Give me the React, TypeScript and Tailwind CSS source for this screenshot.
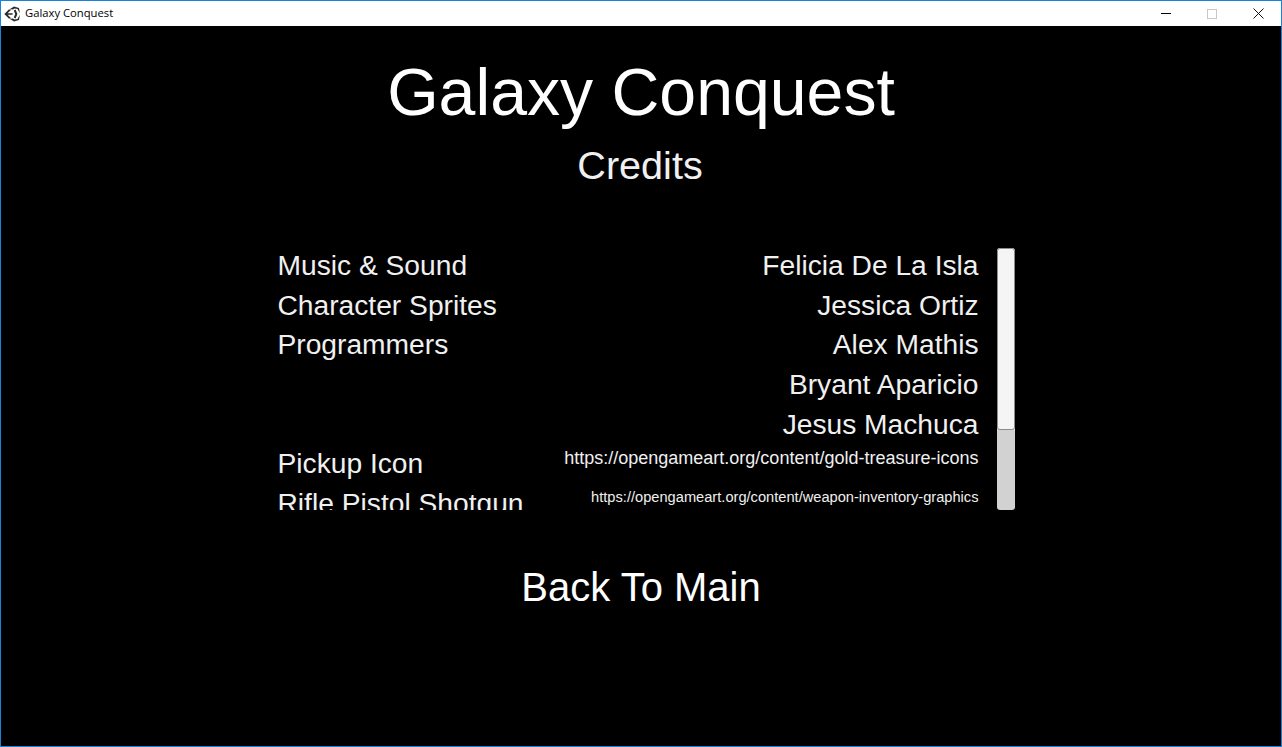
import React from 'react';

const rows = [
  { label: 'Music & Sound', value: 'Felicia De La Isla' },
  { label: 'Character Sprites', value: 'Jessica Ortiz' },
  { label: 'Programmers', value: 'Alex Mathis' },
  { label: '', value: 'Bryant Aparicio' },
  { label: '', value: 'Jesus Machuca' },
  { label: 'Pickup Icon', value: 'https://opengameart.org/content/gold-treasure-icons', small: 'text-[18px] pb-[11px]' },
  { label: 'Rifle,Pistol,Shotgun', value: 'https://opengameart.org/content/weapon-inventory-graphics', small: 'text-[14.65px] pb-[12px]' },
];

function UnityLogo() {
  return (
    <svg width="16" height="16" viewBox="0 0 16 16" fill="#2b2b2b">
      {/* unity cube: arrow on the left, arms top and bottom, bar on the right */}
      <path d="M.3 8 4.8 3.6H7.4L3.6 7.2H8.6V8.8H3.6L7.4 12.4H4.8Z" />
      <path d="M6 2.9 10 .6 15 2l.9 5.2-1.9-3.1-.4-1-3-.7-1.7 1.2Z" />
      <path d="M6 13.1 10 15.4 15 14l.9-5.2-1.9 3.1-.4 1-3 .7-1.7-1.2Z" />
      <path d="M9.8 4.4 11.6 3.4 13.4 8 11.6 12.6 9.8 11.6 11.2 8Z" />
    </svg>
  );
}

export default function App() {
  return (
    <div className="h-[747px] w-[1282px] flex flex-col overflow-hidden border border-[#1883d7] bg-black font-['Liberation_Sans',Arial,sans-serif]">
      {/* title bar */}
      <div className="h-[25px] flex items-center bg-white shrink-0">
        <div className="ml-[3px] w-[16px] flex items-center justify-center">
          <UnityLogo />
        </div>
        <span className="ml-[5px] text-[11.25px] text-black font-['Open_Sans','Noto_Sans',sans-serif]">Galaxy Conquest</span>
        <div className="ml-auto flex items-center h-full">
          <div className="w-[46px] flex justify-center">
            <div className="w-[10px] h-px bg-black" />
          </div>
          <div className="w-[46px] flex justify-center">
            <div className="w-[10px] h-[10px] border border-[#c8c8c8]" />
          </div>
          <div className="w-[46px] flex justify-center">
            <svg width="11" height="11" viewBox="0 0 11 11" stroke="#111" strokeWidth="1">
              <path d="M.5.5l10 10M10.5.5l-10 10" />
            </svg>
          </div>
        </div>
      </div>

      <div className="flex-1 flex flex-col items-center text-[#f0f0f0]">
        <h1 className="mt-[26px] text-[66.2px] leading-[80px] text-white">Galaxy Conquest</h1>
        <h2 className="mt-[8px] mr-[2px] text-[39.6px] leading-[50px]">Credits</h2>

        {/* credits scroll view */}
        <div className="mt-[58px] ml-[10px] w-[737px] h-[262px] flex">
          <div className="w-[701px] h-[262px] overflow-hidden flex flex-col">
            {rows.map((row, i) => (
              <div key={i} className="h-[39.7px] shrink-0 pb-[6px] flex items-center justify-between text-[28.2px] leading-[34px] whitespace-nowrap">
                <span>{row.label}</span>
                <span className={row.small}>{row.value}</span>
              </div>
            ))}
          </div>
          <div className="ml-[18px] w-[18px] h-[262px] rounded-[3px] bg-[#d2d2d2] flex flex-col">
            <div className="h-[182px] rounded-[3px] bg-[#f5f5f5] border border-[#8c8c8c]" />
          </div>
        </div>

        <div className="mt-[52px] text-[40px] leading-[50px] text-white">Back To Main</div>
      </div>
    </div>
  );
}
